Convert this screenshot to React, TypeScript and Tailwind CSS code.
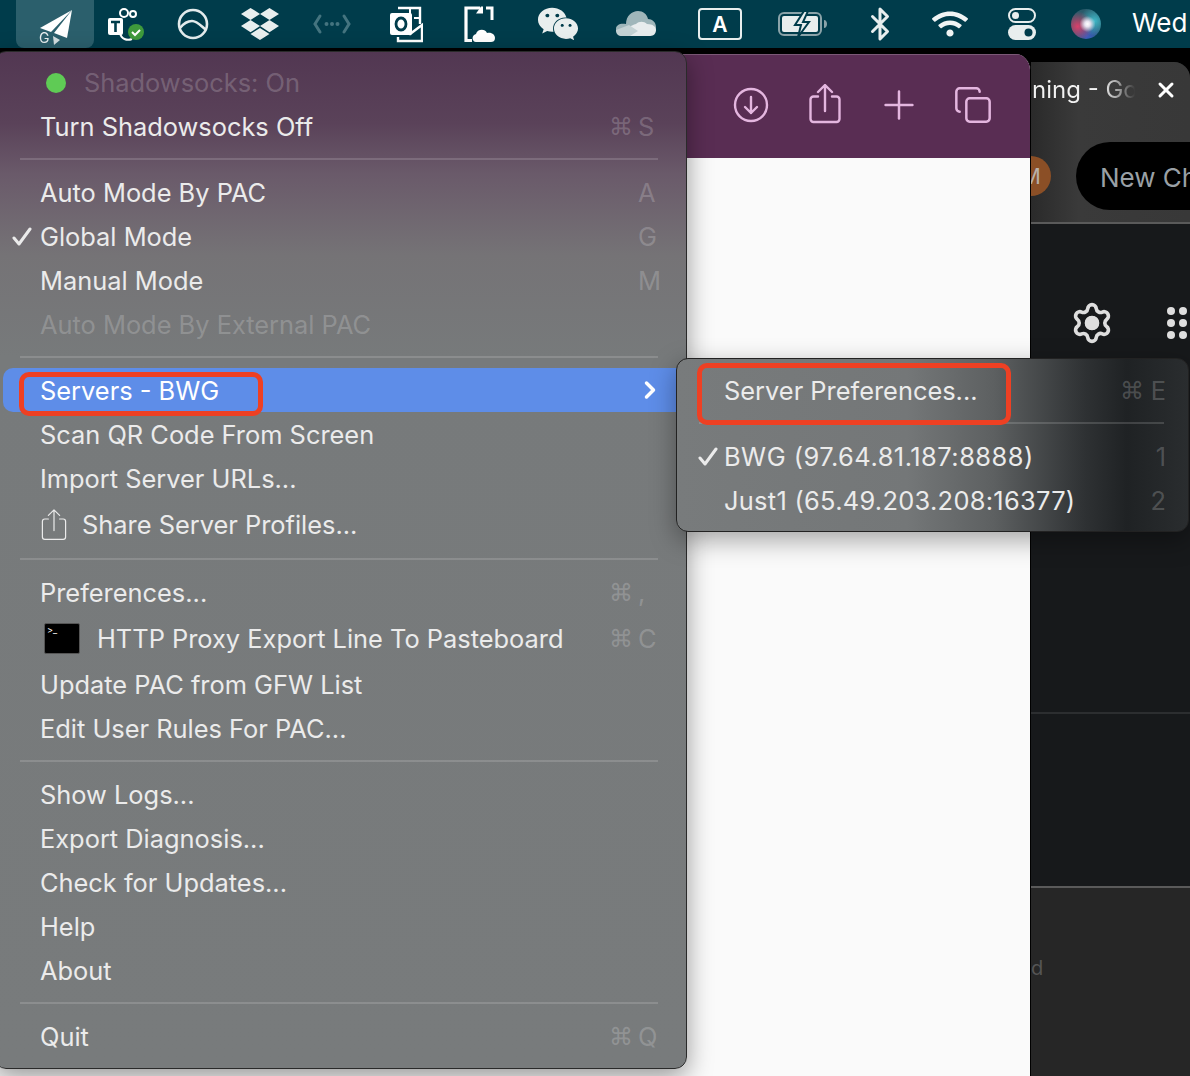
import { Bluetooth, ChevronRight, Copy, Plus, Settings, X } from "lucide-react"
import { FaDropbox, FaWeixin, FaWifi } from "react-icons/fa"

type RowProps = {
    label: string
    keyName?: string
    cmd?: boolean
    checked?: boolean
    dim?: boolean
    icon?: React.ReactNode
    tall?: boolean
    sub?: boolean
    labelClass?: string
}

function Row({ label, keyName, cmd, checked, dim, icon, tall, sub, labelClass }: RowProps) {
    return (
        <div className={`grid items-center pt-[2px] ${tall ? "h-[48px]" : "h-[44px]"} ${sub ? "grid-cols-[47px_1fr_28px_40px]" : "grid-cols-[38px_1fr_29px_48px]"}`}>
            <span className={`flex ${sub ? "justify-end pr-[6px]" : "pl-[10px]"}`}>
                {checked && <CheckMark />}
            </span>
            <span className={`flex items-center whitespace-nowrap ${dim ? "text-white/20" : "text-[#ebebeb]"} ${labelClass ?? ""}`}>
                {icon}
                {label}
            </span>
            <span className="font-['DejaVu_Sans',sans-serif] text-[24px] text-white/20">{cmd ? "⌘" : ""}</span>
            <span className={`text-white/20 ${sub ? "text-right pr-[22px] -ml-[10px]" : ""}`}>{keyName}</span>
        </div>
    )
}

function CheckMark() {
    return (
        <svg width="20" height="20" viewBox="0 0 20 20" fill="none" stroke="#ebebeb" strokeWidth="3" strokeLinecap="round" strokeLinejoin="round">
            <path d="M2 11l5 6L18 2" />
        </svg>
    )
}

function ShareGlyph({ className, stroke }: { className: string; stroke: number }) {
    return (
        <svg className={className} viewBox="0 0 40 40" fill="none" stroke="currentColor" strokeWidth={stroke} strokeLinecap="round" strokeLinejoin="round">
            <path d="M13 12.500H8.500a3 3 0 0 0-3 3V35a3 3 0 0 0 3 3h23a3 3 0 0 0 3-3V15.500a3 3 0 0 0-3-3H27" />
            <path d="M20 27V2M13 8l7-7 7 7" />
        </svg>
    )
}

function Separator() {
    return (
        <div className="h-[22px] flex items-center pl-[18px]">
            <div className="h-[2px] w-[638px] bg-white/15" />
        </div>
    )
}

function MenuBar() {
    return (
        <div className="h-[48px] shrink-0 bg-[#003c4b] flex items-center pl-[16px] text-white">
            <div className="w-[78px] h-[48px] rounded-b-lg bg-[#2b5f6c] flex items-center justify-center">
                <svg width="78" height="48" viewBox="0 0 78 48" fill="white">
                    <path d="M56 10L24 28l11 4z" />
                    <path d="M56 10L38 33l13 5z" />
                    <path d="M37 36l7 4-6 5z" opacity="0.8" />
                    <text x="23" y="43" fontSize="14" fontFamily="Inter" opacity="0.9">G</text>
                </svg>
            </div>
            <div className="w-[62px] flex justify-center">
                <svg width="40" height="38" viewBox="0 0 40 38" fill="none">
                    <circle cx="19" cy="8" r="4" stroke="white" strokeWidth="2" />
                    <circle cx="28" cy="9" r="3" stroke="white" strokeWidth="2" />
                    <path d="M15 28c1 6 7 8 12 6" stroke="white" strokeWidth="2" />
                    <rect x="3" y="13" width="15" height="17" rx="2" fill="white" />
                    <path d="M6 17h9M10.500 17v10" stroke="#003c4b" strokeWidth="2.600" />
                    <circle cx="31" cy="27" r="8" fill="#3f9a3c" />
                    <path d="M27 27l3 3 5-5" stroke="white" strokeWidth="2" />
                </svg>
            </div>
            <div className="w-[74px] flex justify-center">
                <svg width="32" height="32" viewBox="0 0 32 32" fill="none" stroke="#e3ebec" strokeWidth="2.600">
                    <circle cx="16" cy="16" r="14" />
                    <path d="M3 20c4-5 8-7 12-7 5 0 8 4 14 9" />
                </svg>
            </div>
            <div className="w-[60px] flex justify-center">
                <FaDropbox className="size-[38px] text-[#e8eeee]" />
            </div>
            <div className="w-[84px] flex justify-center">
                <svg width="38" height="22" viewBox="0 0 38 22" fill="none" stroke="#44747f" strokeWidth="3" strokeLinecap="round">
                    <path d="M7 3l-5 8 5 8M31 3l5 8-5 8" />
                    <path d="M13.500 11h.01M19 11h.01M24.500 11h.01" strokeWidth="4" />
                </svg>
            </div>
            <div className="w-[64px] flex justify-center">
                <svg width="34" height="38" viewBox="0 0 34 38" fill="none">
                    <path d="M9 3h22v16M9 32v4h24V20L21 29l-6-3" stroke="white" strokeWidth="2.400" />
                    <path d="M21 3v10M25 13h6" stroke="white" strokeWidth="2" />
                    <rect x="1" y="8" width="22" height="22" rx="2" fill="white" />
                    <ellipse cx="12" cy="19" rx="5" ry="6" stroke="#003c4b" strokeWidth="2.800" />
                </svg>
            </div>
            <div className="w-[84px] flex justify-center">
                <svg width="34" height="38" viewBox="0 0 34 38" fill="none">
                    <path d="M3 37V3h14" stroke="white" strokeWidth="3.200" />
                    <path d="M3 35.500h6" stroke="white" strokeWidth="3" />
                    <path d="M18 1.500l-5 7h7v-7z" fill="white" />
                    <path d="M23 3h6v12" stroke="white" strokeWidth="3" />
                    <path d="M13 37c-4 0-5-7 0-8 1-5 9-6 11-1 5-1 8 2 8 5s-2 4-4 4z" fill="white" />
                </svg>
            </div>
            <div className="w-[72px] flex justify-center">
                <FaWeixin className="size-[42px] text-[#e8eeee]" />
            </div>
            <div className="w-[84px] flex justify-center">
                <svg width="40" height="28" viewBox="0 0 40 28">
                    <path d="M10 14C10 6 16 1 22 1c5 0 9 3 10 8 4 0 8 3 8 8s-3 9-8 9H8c-5 0-8-3-8-7 0-4 4-6 10-5z" fill="#9fb6ba" />
                    <path d="M12 26H34c4 0 6-3 6-6 0-3-3-6-9-6-3-3-8-3-11 0-3 1-4 1-6 3z" fill="#e7eced" />
                    <path d="M14 26H6c-4 0-6-2-6-6l13-5 9 6z" fill="#c4d2d4" />
                </svg>
            </div>
            <div className="w-[84px] flex justify-center">
                <div className="w-[44px] h-[32px] rounded-[4px] border-2 border-[#e8eeee] flex items-center justify-center font-['Inter',sans-serif] text-[21px] font-semibold leading-none">A</div>
            </div>
            <div className="w-[82px] flex justify-center">
                <svg width="50" height="26" viewBox="0 0 50 26">
                    <rect x="1" y="2" width="42" height="22" rx="5" fill="none" stroke="#8aa3a9" strokeWidth="2" />
                    <rect x="4" y="5" width="36" height="16" rx="2" fill="#e8eeee" />
                    <path d="M46 9c2 0 3 2 3 4s-1 4-3 4z" fill="#8aa3a9" />
                    <path d="M26 0l-9 14h6l-3 12 11-15h-6l5-11z" fill="#e8eeee" stroke="#003c4b" strokeWidth="2" />
                </svg>
            </div>
            <div className="w-[72px] flex justify-center">
                <Bluetooth className="size-[36px] text-[#e8eeee]" strokeWidth={2} />
            </div>
            <div className="w-[68px] flex justify-center">
                <FaWifi className="size-[36px] text-[#f0f4f4]" />
            </div>
            <div className="w-[76px] flex justify-center">
                <svg width="28" height="32" viewBox="0 0 28 32">
                    <rect x="1" y="1" width="26" height="13" rx="6.500" fill="none" stroke="#e8eeee" strokeWidth="2" />
                    <circle cx="7.500" cy="7.500" r="3.500" fill="#e8eeee" />
                    <rect x="0" y="17" width="28" height="15" rx="7.500" fill="#e8eeee" />
                    <circle cx="20.500" cy="24.500" r="4" fill="#003c4b" />
                </svg>
            </div>
            <div className="w-[52px] flex justify-center">
                <div className="size-[30px] rounded-full bg-[#2a5a6a] bg-[radial-gradient(circle_at_55%_50%,#ffffff_0%,#e8e4f0_12%,transparent_36%),radial-gradient(circle_at_22%_58%,#d8406a_0%,transparent_52%),radial-gradient(circle_at_78%_40%,#3fb8c8_0%,transparent_50%),radial-gradient(circle_at_55%_92%,#3a5cc0_0%,transparent_50%)]" />
            </div>
            <span className="pl-[20px] pb-[2px] whitespace-nowrap font-['Inter',sans-serif] text-[26px] leading-none">Wed</span>
        </div>
    )
}

function WhiteWindow() {
    return (
        <div className="w-[1031px] shrink-0 mt-[4px] rounded-tr-[16px] overflow-hidden flex flex-col border-r border-black bg-[#fafafa] z-10">
            <div className="h-[104px] shrink-0 bg-[#592d53] border-t border-[#7b5876] flex justify-end items-center gap-[34px] pr-[37px] pb-[4px] text-[#e4b6df]">
                <svg className="size-[40px]" viewBox="0 0 40 40" fill="none" stroke="currentColor" strokeWidth="2.400" strokeLinecap="round" strokeLinejoin="round">
                    <circle cx="20" cy="20" r="16" />
                    <path d="M20 12v16M14 22l6 6 6-6" />
                </svg>
                <ShareGlyph className="size-[40px] -mt-[2px]" stroke={2.4} />
                <Plus className="size-[46px] -mx-[3px]" strokeWidth={1.300} />
                <Copy className="size-[40px]" strokeWidth={1.500} />
            </div>
        </div>
    )
}

function DarkWindow() {
    return (
        <div className="flex-1 mt-[12px] rounded-tr-[16px] overflow-hidden flex flex-col bg-[#17191b] font-['Inter',sans-serif]">
            <div className="h-[162px] shrink-0 bg-[linear-gradient(90deg,#2a2a2a,#3a3a3a_30%,#383838)] border-b-2 border-[#5a5a5a]">
                <div className="h-[54px] flex items-center pt-[2px] pl-[1px]">
                    <span className="w-[103px] whitespace-nowrap overflow-hidden text-[24px] bg-[linear-gradient(90deg,#f2f2f2_68%,#8a8a8a_88%,#3a3a3a)] bg-clip-text text-transparent">ning - Go</span>
                    <X className="size-[24px] ml-[19px] text-white" strokeWidth={3} />
                </div>
                <div className="flex items-center mt-[26px]">
                    <div className="size-[40px] -ml-[20px] shrink-0 rounded-full bg-[#8b4f26] flex items-center justify-center text-[22px] text-[#b9b0a8]">M</div>
                    <div className="w-[160px] h-[68px] ml-[25px] pt-[2px] shrink-0 rounded-full bg-black pl-[24px] flex items-center whitespace-nowrap text-[26px] text-[#9aa0a6]">New Chat</div>
                </div>
            </div>
            <div className="h-[490px] shrink-0 border-b-2 border-[#2c2e30] pt-[77px] pl-[39px]">
                <div className="flex items-center gap-[53px]">
                    <div className="relative size-[44px] shrink-0">
                        <Settings className="size-[44px] text-[#dedede]" strokeWidth={2} />
                        <span className="absolute left-[15px] top-[15px] size-[14px] rounded-full bg-[#dedede]" />
                    </div>
                    <div className="grid grid-cols-3 gap-[4px] shrink-0 w-[32px]">
                        {Array.from({ length: 9 }).map((_, i) => (
                            <span key={i} className="size-[8px] rounded-full bg-[#dedede]" />
                        ))}
                    </div>
                </div>
            </div>
            <div className="h-[172px] shrink-0" />
            <div className="flex-1 border-t-2 border-[#5a5a5a] bg-[#262626] pt-[70px] text-[20px] leading-none text-[#555]">d</div>
        </div>
    )
}

function MainMenu() {
    const shareIcon = <ShareGlyph className="size-[32px] mr-[12px] -ml-[2px] text-[#ebebeb]" stroke={1.5} />
    const termIcon = (
        <span className="w-[36px] h-[31px] mr-[17px] ml-[4px] bg-black border border-[#555] rounded-[2px] text-[9px] leading-[12px] pl-[2px] text-white">&gt;_</span>
    )
    return (
        <div className="absolute -left-[6px] top-[51px] w-[693px] h-[1018px] z-20 rounded-[12px] border border-[#2a2a2a] bg-[linear-gradient(180deg,#523752_0%,#5a4259_7%,#6a5a6a_12%,#757376_20%,#777a7b_30%,#787b7c_100%)] shadow-[0_8px_26px_rgba(0,0,0,0.4)] pt-[8px] pl-[7px] text-[25.4px] font-['Inter',sans-serif]">
            <div className="flex items-center h-[44px] pt-[2px]">
                <span className="size-[20px] ml-[44px] rounded-full bg-[#5fcb55]" />
                <span className="pl-[18px] text-white/20">Shadowsocks: On</span>
            </div>
            <Row label="Turn Shadowsocks Off" cmd keyName="S" />
            <Separator />
            <Row label="Auto Mode By PAC" keyName="A" />
            <Row label="Global Mode" keyName="G" checked />
            <Row label="Manual Mode" keyName="M" />
            <Row label="Auto Mode By External PAC" dim />
            <Separator />
            <div className="h-[44px] -mr-[10px] ml-[1px] pt-[2px] rounded-[10px] bg-[#5e8de8] flex items-center pl-[37px] text-white">Servers - BWG</div>
            <Row label="Scan QR Code From Screen" />
            <Row label="Import Server URLs..." />
            <Row label="Share Server Profiles..." icon={shareIcon} tall />
            <Separator />
            <Row label="Preferences..." cmd keyName="," />
            <Row label="HTTP Proxy Export Line To Pasteboard" icon={termIcon} cmd keyName="C" tall />
            <Row label="Update PAC from GFW List" />
            <Row label="Edit User Rules For PAC..." />
            <Separator />
            <Row label="Show Logs..." />
            <Row label="Export Diagnosis..." />
            <Row label="Check for Updates..." />
            <Row label="Help" />
            <Row label="About" />
            <Separator />
            <Row label="Quit" cmd keyName="Q" />
        </div>
    )
}

function SubMenu() {
    return (
        <div className="absolute left-[676px] top-[358px] w-[513px] h-[174px] z-30 rounded-[12px] border border-[#222] bg-[linear-gradient(90deg,#787b7c_0%,#747778_45%,#5d6061_62%,#2e3133_80%,#1f2224_88%,#2a2d2f_100%)] shadow-[0_8px_26px_rgba(0,0,0,0.35)] pt-[9px] text-[25.4px] font-['Inter',sans-serif]">
            <Row label="Server Preferences..." cmd keyName="E" sub />
            <div className="h-[22px] flex items-center pl-[22px]">
                <div className="h-[2px] w-[465px] bg-white/15" />
            </div>
            <Row label="BWG (97.64.81.187:8888)" keyName="1" checked sub labelClass="tracking-[0.5px]" />
            <Row label="Just1 (65.49.203.208:16377)" keyName="2" sub labelClass="tracking-[0.3px]" />
        </div>
    )
}

export default function App() {
    return (
        <div className="relative w-[1190px] h-[1076px] overflow-hidden bg-black flex flex-col">
            <MenuBar />
            <div className="flex-1 flex min-h-0 mt-[2px]">
                <WhiteWindow />
                <DarkWindow />
            </div>
            <MainMenu />
            <ChevronRight className="absolute left-[636px] top-[376px] size-[28px] z-20 text-white" strokeWidth={3} />
            <SubMenu />
            <div className="absolute left-[19px] top-[372px] w-[244px] h-[44px] z-40 rounded-[10px] border-[5px] border-[#ee4023]" />
            <div className="absolute left-[697px] top-[363px] w-[314px] h-[62px] z-40 rounded-[10px] border-[5px] border-[#ee4023]" />
        </div>
    )
}
